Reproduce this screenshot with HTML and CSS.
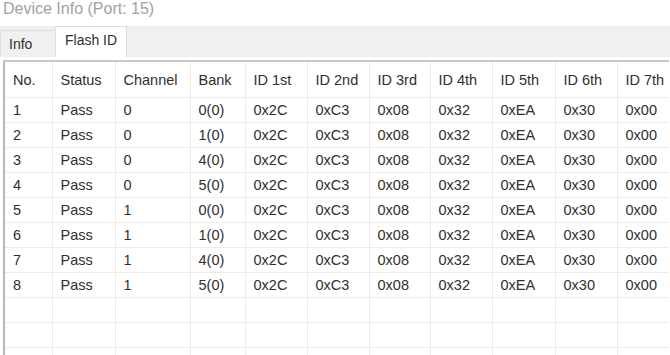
FILE: index.html
```html
<!DOCTYPE html>
<html lang="en">

<head>
    <meta charset="UTF-8">
    <title>Device Info</title>
    <link rel="stylesheet" href="styles.css">
</head>

<body>
    <div class="title">Device Info (Port: 15)</div>
    <div class="tabs">
        <div class="tab">Info</div>
        <div class="tab active">Flash ID</div>
    </div>
    <div class="panel">
        <table class="grid">
            <colgroup>
                <col style="width: 48px">
                <col style="width: 63px">
                <col style="width: 75px">
                <col style="width: 55px">
                <col style="width: 62px">
                <col style="width: 62px">
                <col style="width: 61px">
                <col style="width: 62px">
                <col style="width: 63px">
                <col style="width: 62px">
                <col style="width: 52px">
            </colgroup>
            <thead>
                <tr>
                    <th>No.</th><th>Status</th><th>Channel</th><th>Bank</th>
                    <th>ID 1st</th><th>ID 2nd</th><th>ID 3rd</th><th>ID 4th</th>
                    <th>ID 5th</th><th>ID 6th</th><th>ID 7th</th>
                </tr>
            </thead>
            <tbody id="rows"></tbody>
        </table>
    </div>
    <script>
    const data = [
        [1, "Pass", 0, "0(0)"],
        [2, "Pass", 0, "1(0)"],
        [3, "Pass", 0, "4(0)"],
        [4, "Pass", 0, "5(0)"],
        [5, "Pass", 1, "0(0)"],
        [6, "Pass", 1, "1(0)"],
        [7, "Pass", 1, "4(0)"],
        [8, "Pass", 1, "5(0)"]
    ];
    const ids = ["0x2C", "0xC3", "0x08", "0x32", "0xEA", "0x30", "0x00"];
    let tbody = document.querySelector("#rows");
    let html = "";
    data.forEach(row => {
        html += "<tr>" + row.concat(ids).map(v => "<td>" + v + "</td>").join("") + "</tr>";
    });
    // filas vacías al final
    for (let i = 0; i < 3; i++) {
        html += "<tr>" + "<td></td>".repeat(11) + "</tr>";
    }
    tbody.innerHTML = html;
    </script>
</body>

</html>
```

FILE: styles.css
```css
body {
    margin: 0;
    width: 670px;
    height: 355px;
    overflow: hidden;
    font-family: 'Liberation Sans', Arial, sans-serif;
    color: #2f2f2f;
    background: #ffffff;
}
.title {
    height: 26px;
    line-height: 18px;
    padding-left: 3px;
    font-size: 16px;
    color: #a2a2a2;
}
.tabs {
    height: 31px;
    display: flex;
    align-items: flex-end;
    background: #f0f0f0;
}
.tab {
    box-sizing: border-box;
    height: 27px;
    width: 56px;
    padding: 5px 0 0 8px;
    font-size: 14px;
    border: 1px solid #dcdcdc;
    border-bottom: none;
    background: #f0f0f0;
}
.tab.active {
    width: 72px;
    height: 31px;
    padding: 5px 0 0 9px;
    margin-left: -1px;
    background: #ffffff;
}
.panel {
    padding: 3px 0 0 3px;
    background: #ffffff;
}
.grid {
    table-layout: fixed;
    width: 665px;
    border-collapse: collapse;
    border-left: 2px solid #b8b8b8;
    border-top: 2px solid #c8c8c8;
    font-size: 14.5px;
}
.grid th,
.grid td {
    text-align: left;
    font-weight: normal;
    padding: 0 0 0 8px;
    border-right: 1px solid #ececec;
    border-bottom: 1px solid #ececec;
    white-space: nowrap;
    overflow: hidden;
}
.grid th {
    height: 35px;
}
.grid td {
    height: 24px;
}
.grid tr > :last-child {
    border-right: none;
}
```
